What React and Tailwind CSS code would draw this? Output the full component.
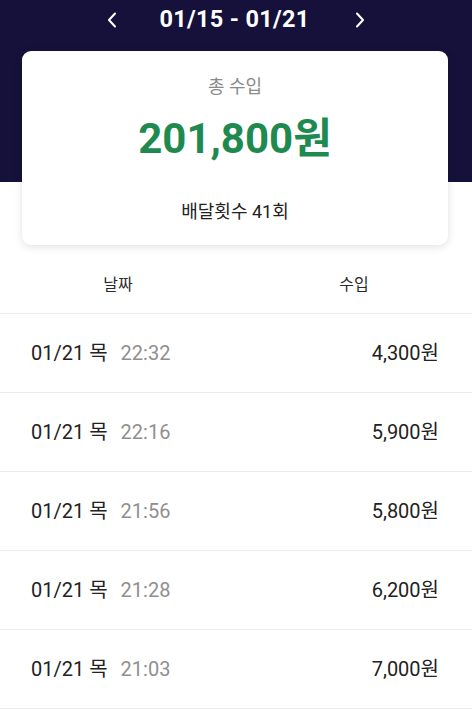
import React from "react";

const rows = [
  { d: "01/21 목", t: "22:32", a: "4,300원" },
  { d: "01/21 목", t: "22:16", a: "5,900원" },
  { d: "01/21 목", t: "21:56", a: "5,800원" },
  { d: "01/21 목", t: "21:28", a: "6,200원" },
  { d: "01/21 목", t: "21:03", a: "7,000원" },
];

const font = { fontFamily: 'Roboto, "Noto Sans CJK KR", sans-serif' };

export default function App() {
  return (
    <div className="w-[472px] h-[711px] overflow-hidden bg-white" style={font}>
      <div className="bg-[#15113a] h-[182px]">
        <div className="h-[40px] flex items-center justify-center">
          <svg width="10" height="16" viewBox="0 0 10 16" className="mr-[42px]">
            <polyline points="8,1.5 2,8 8,14.5" fill="none" stroke="white" strokeWidth="2" strokeLinecap="round" strokeLinejoin="round" />
          </svg>
          <div className="text-white font-bold text-[23.5px] leading-none tracking-[0.3px]">01/15 - 01/21</div>
          <svg width="10" height="16" viewBox="0 0 10 16" className="ml-[45px]">
            <polyline points="2,1.5 8,8 2,14.5" fill="none" stroke="white" strokeWidth="2" strokeLinecap="round" strokeLinejoin="round" />
          </svg>
        </div>
        <div className="mt-[11px] ml-[22px] w-[426px] h-[194px] bg-white rounded-[9px] shadow-[0_2px_8px_rgba(0,0,0,0.12)] flex flex-col items-center relative z-10">
          <div className="mt-[27px] text-[18px] leading-none text-[#8a8a8a]">총 수입</div>
          <div className="mt-[22px] text-[42px] leading-none font-bold text-[#1f8a50]">201,800원</div>
          <div className="mt-[43px] text-[18px] leading-none text-[#222]">배달횟수 41회</div>
        </div>
      </div>
      <div className="mt-[63px] grid grid-cols-2 h-[69px] items-center border-b border-[#ebebeb] text-[16px] text-[#2a2a2a]">
        <div className="text-center pt-[12px]">날짜</div>
        <div className="text-center pt-[12px]">수입</div>
      </div>
      {rows.map((r, i) => (
        <div key={i} className="h-[79px] flex items-center justify-between pl-[31px] pr-[33px] border-b border-[#ebebeb] text-[20px] text-[#222]">
          <div className="flex items-center">
            <span>{r.d}</span>
            <span className="ml-[13px] text-[#8f8f8f]">{r.t}</span>
          </div>
          <div>{r.a}</div>
        </div>
      ))}
    </div>
  );
}
